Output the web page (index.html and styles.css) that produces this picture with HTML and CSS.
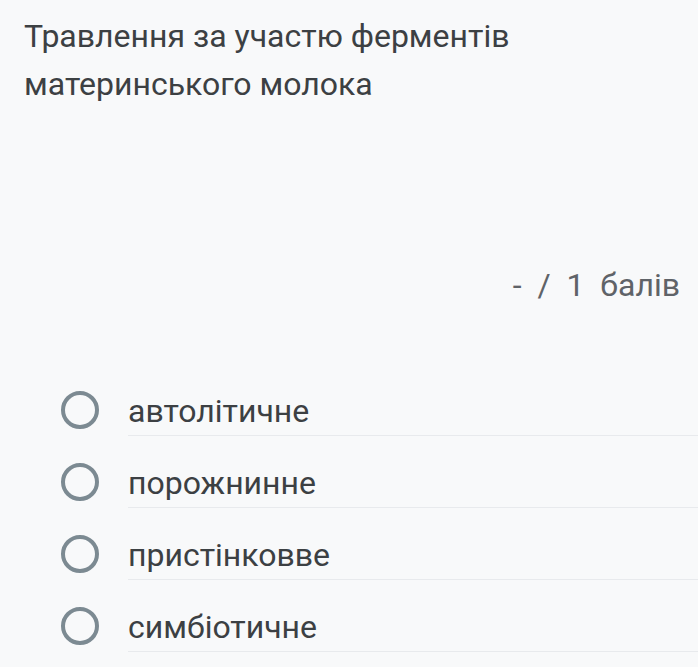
FILE: index.html
```html
<!DOCTYPE html>
<html lang="uk">
<head>
<meta charset="utf-8">
<link rel="stylesheet" href="styles.css">
</head>
<body>
<div class="page">
  <div class="title">Травлення за участю ферментів<br>материнського молока</div>
  <div class="score">-&nbsp;&nbsp;/&nbsp;&nbsp;1&nbsp;&nbsp;балів</div>
  <div class="options">
    <div class="option"><span class="radio"></span><span class="label">автолітичне</span></div>
    <div class="option"><span class="radio"></span><span class="label">порожнинне</span></div>
    <div class="option"><span class="radio"></span><span class="label">пристінковве</span></div>
    <div class="option"><span class="radio"></span><span class="label">симбіотичне</span></div>
  </div>
</div>
</body>
</html>
```

FILE: styles.css
```css
html, body {
  margin: 0;
  padding: 0;
  background: #f8f9fa;
}
body {
  font-family: Roboto, "Noto Sans", sans-serif;
  color: #3c4043;
}
.page {
  width: 698px;
  height: 667px;
  overflow: hidden;
}
.title {
  padding: 12px 0 0 24px;
  font-size: 32px;
  line-height: 48px;
  color: #3c4043;
}
.score {
  margin-top: 153px;
  padding-right: 18px;
  text-align: right;
  font-size: 32px;
  line-height: 48px;
  color: #5f6368;
}
.options {
  margin-top: 77px;
  display: flex;
  flex-direction: column;
  gap: 22px;
}
.option {
  display: flex;
  align-items: center;
  height: 50px;
}
.radio {
  box-sizing: border-box;
  width: 38px;
  height: 38px;
  margin: 0 29px 2px 61px;
  border: 4px solid #7c8a92;
  border-radius: 50%;
  flex: none;
}
.label {
  flex: 1;
  align-self: stretch;
  display: flex;
  align-items: center;
  font-size: 32px;
  color: #3c4043;
  border-bottom: 1px solid #e8eaed;
}
```
